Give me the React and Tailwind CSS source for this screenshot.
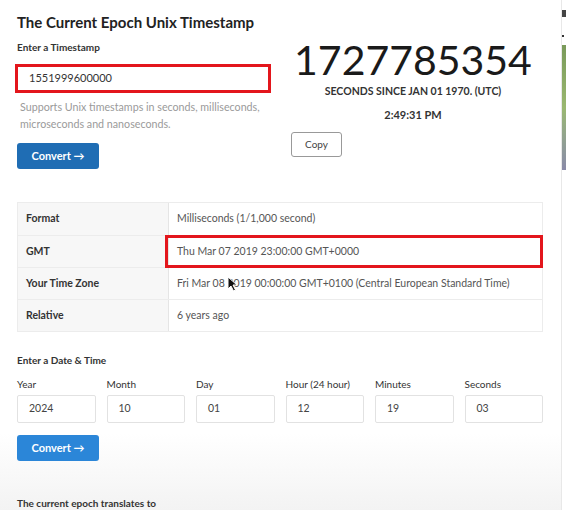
import React from "react";

const fields = [
  { label: "Year", value: "2024" },
  { label: "Month", value: "10" },
  { label: "Day", value: "01" },
  { label: "Hour (24 hour)", value: "12" },
  { label: "Minutes", value: "19" },
  { label: "Seconds", value: "03" },
];

const rows = [
  { k: "Format", v: "Milliseconds (1/1,000 second)" },
  { k: "GMT", v: "Thu Mar 07 2019 23:00:00 GMT+0000", hl: true },
  { k: "Your Time Zone", v: "Fri Mar 08 2019 00:00:00 GMT+0100 (Central European Standard Time)" },
  { k: "Relative", v: "6 years ago" },
];

function Cursor() {
  return (
    <svg className="absolute left-[58px] top-[8px]" width="11" height="16" viewBox="0 0 11 16">
      <path d="M1 1 L1 13 L4 10 L6.5 15 L8.5 14 L6 9 L10 9 Z" fill="#111" stroke="#fff" strokeWidth="1" />
    </svg>
  );
}

export default function App() {
  return (
    <div className="w-[566px] h-[510px] overflow-hidden flex bg-white text-[#222]" style={{ fontFamily: "Lato, 'Open Sans', sans-serif" }}>
      <div className="w-[561px] shrink-0 pl-[17px] pr-[18px] pt-[12px] bg-gradient-to-b from-white from-85% to-[#f3f3f3]">
        <div className="flex">
          <div className="w-[258px] shrink-0">
            <h1 className="text-[15px] font-bold leading-[20px] text-[#222]">The Current Epoch Unix Timestamp</h1>
            <div className="mt-[8px] text-[10px] font-bold leading-[14px] text-[#333]">Enter a Timestamp</div>
            <div className="mt-[10px] -ml-[2px] w-[256px] h-[29px] border-[3px] border-[#e3161c] flex items-center pl-[11px] text-[11px] text-[#333]">
              1551999600000
            </div>
            <p className="mt-[5px] pl-[3px] text-[10.7px] leading-[17px] text-[#9a9a9a]">
              Supports Unix timestamps in seconds, milliseconds, microseconds and nanoseconds.
            </p>
            <button className="mt-[11px] w-[82px] h-[26px] rounded-[3px] bg-[#1f6db4] text-white text-[11px] font-bold flex items-center justify-center">
              Convert →
            </button>
          </div>
          <div className="flex-1 pl-[16px] pt-[28px]">
            <div className="flex flex-col items-center w-[244px]">
              <div className="text-[41px] leading-[40px] text-[#1a1a1a]">1727785354</div>
              <div className="mt-[5px] text-[10.5px] font-bold leading-[13px] text-[#333]">SECONDS SINCE JAN 01 1970. (UTC)</div>
              <div className="mt-[10px] text-[11px] font-bold leading-[13px] text-[#333]">2:49:31 PM</div>
            </div>
            <button className="mt-[11px] w-[51px] h-[25px] rounded-[3px] border border-[#999] bg-white text-[10px] text-[#444]">
              Copy
            </button>
          </div>
        </div>

        <div className="mt-[33px] w-[526px] border border-[#ececec] text-[10.5px]">
          {rows.map((r, i) => (
            <div key={r.k} className={`flex h-[32px] ${i > 0 ? "border-t border-[#ececec]" : ""}`}>
              <div className="w-[151px] shrink-0 bg-[#f7f7f7] border-r border-[#e5e5e5] flex items-center pl-[8px] font-bold text-[#333]">
                {r.k}
              </div>
              <div className="flex-1 relative flex items-center pl-[8px] text-[#555]">
                {r.hl && <div className="absolute -left-[4px] -right-[1px] -top-[1px] -bottom-[1px] border-[3px] border-[#e3161c]" />}
                <span className="relative">{r.v}</span>
                {r.k === "Your Time Zone" && <Cursor />}
              </div>
            </div>
          ))}
        </div>

        <div className="mt-[21px] text-[10px] font-bold leading-[14px] text-[#333]">Enter a Date &amp; Time</div>
        <div className="mt-[10px] grid grid-cols-6 gap-x-[11px] w-[526px]">
          {fields.map((f) => (
            <div key={f.label}>
              <div className="text-[10px] leading-[14px] text-[#333]">{f.label}</div>
              <div className="mt-[4px] h-[28px] border border-[#e2e2e2] rounded-[2px] bg-white flex items-center pl-[11px] text-[10.5px] text-[#444]">
                {f.value}
              </div>
            </div>
          ))}
        </div>
        <button className="mt-[12px] w-[82px] h-[26px] rounded-[3px] bg-[#2b86d8] text-white text-[11px] font-bold flex items-center justify-center">
          Convert →
        </button>
        <div className="mt-[35px] text-[10px] font-bold leading-[14px] text-[#333]">The current epoch translates to</div>
      </div>
      <div className="w-[1px] bg-[#e8e8e8]" />
      <div className="flex-1 pt-[10px]">
        <div className="h-[7px] bg-[#444]" />
        <div className="mt-[18px] h-[2px] w-[2px] bg-[#333]" />
        <div className="mt-[8px] h-[125px] bg-gradient-to-b from-[#7a9a5a] via-[#9ab870] to-[#8a8aa8]" />
      </div>
    </div>
  );
}
